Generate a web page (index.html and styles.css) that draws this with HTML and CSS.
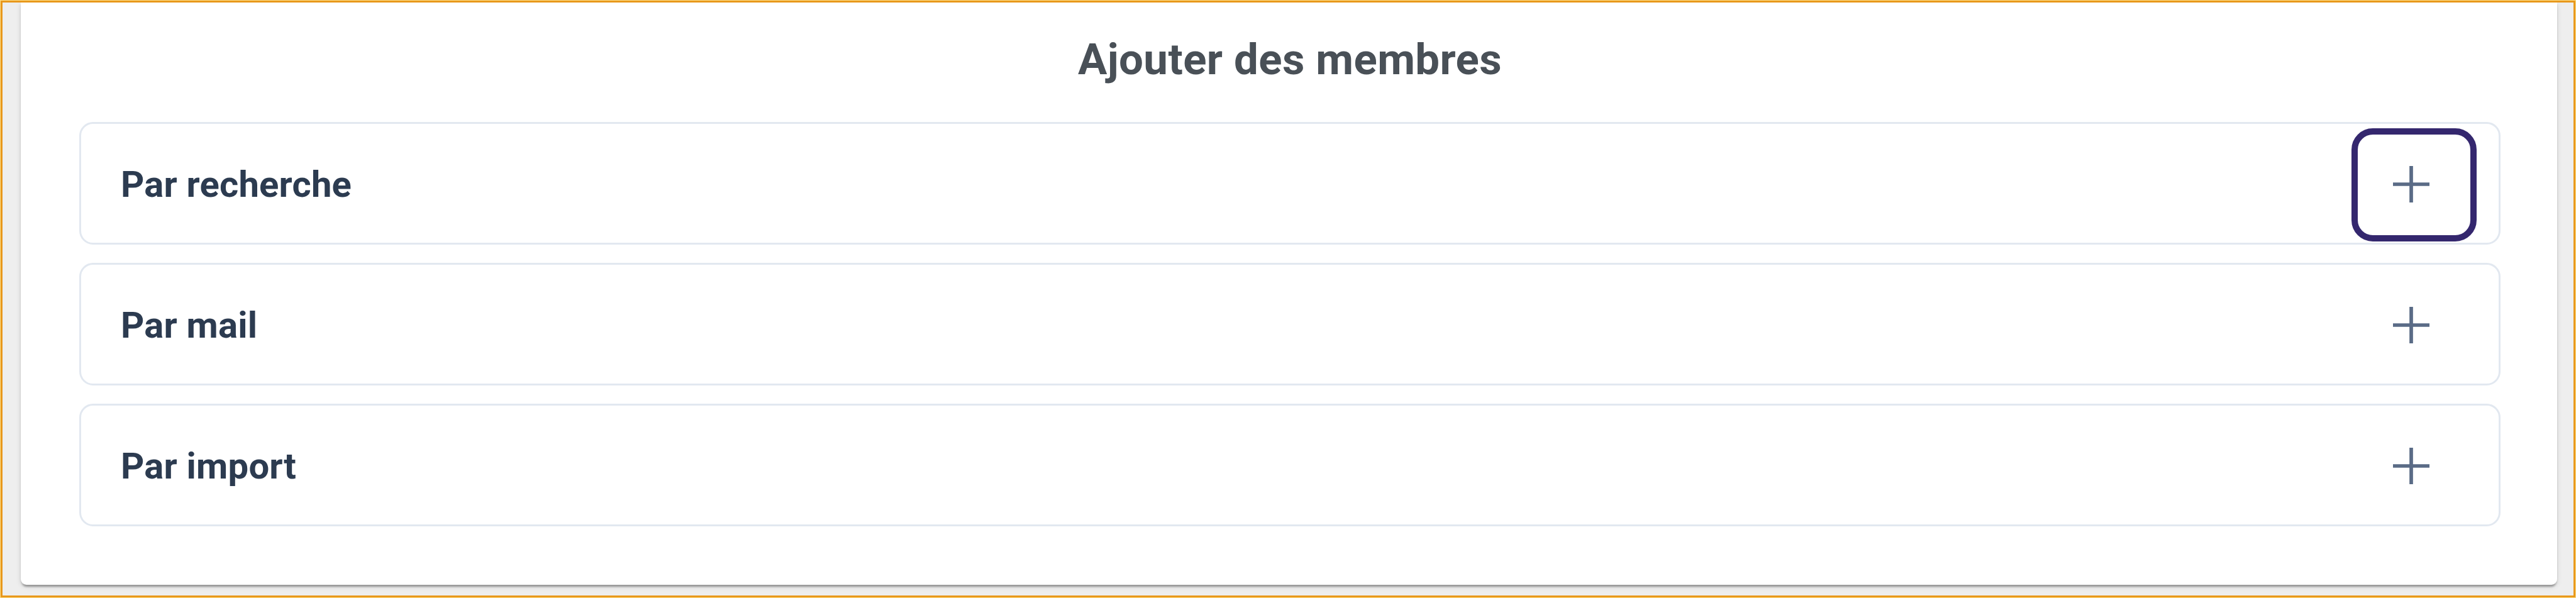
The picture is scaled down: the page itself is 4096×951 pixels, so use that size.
FILE: index.html
```
<!DOCTYPE html>
<html lang="fr">
<head>
    <meta charset="UTF-8">
    <meta name="viewport" content="width=device-width, initial-scale=1.0">
    <title>Ajouter des membres</title>
    <link rel="stylesheet" href="styles.css">
</head>
<body>
    <div class="frame">
        <main class="card">
            <h1>Ajouter des membres</h1>
            <section class="panel">
                <h2>Par recherche</h2>
                <div class="toggle">
                    <svg class="plus" viewBox="0 0 58 58"><path d="M29 0V58M0 29H58"/></svg>
                    <span class="highlight"></span>
                </div>
            </section>
            <section class="panel">
                <h2>Par mail</h2>
                <div class="toggle">
                    <svg class="plus" viewBox="0 0 58 58"><path d="M29 0V58M0 29H58"/></svg>
                </div>
            </section>
            <section class="panel">
                <h2>Par import</h2>
                <div class="toggle">
                    <svg class="plus" viewBox="0 0 58 58"><path d="M29 0V58M0 29H58"/></svg>
                </div>
            </section>
        </main>
    </div>
</body>
</html>
```

FILE: styles.css
```
* {
    box-sizing: border-box;
}
body {
    margin: 0;
    height: 951px;
    border: 1px solid #fde08a;
    font-family: Roboto, Arial, sans-serif;
}
.frame {
    height: 949px;
    border: 3px solid #e8981c;
    background: #eee;
    overflow: hidden;
}
.card {
    display: flex;
    flex-direction: column;
    gap: 29px;
    height: 926px;
    margin: 0 26px 0 29px;
    padding: 0 90px 0 93px;
    background: #fff;
    border-radius: 0 0 9px 9px;
    box-shadow: 0 6px 3px -3px rgba(0, 0, 0, 0.2),
        0 3px 3px 0 rgba(0, 0, 0, 0.14),
        0 3px 8px 0 rgba(0, 0, 0, 0.12);
}
h1, h2 {
    margin: 0;
    font-weight: 700;
}
h1 {
    height: 161px;
    padding-top: 46px;
    text-align: center;
    font-size: 69px;
    line-height: 90px;
    letter-spacing: 0.4px;
    color: #495057;
}
h2 {
    font-size: 58px;
    line-height: 80px;
    letter-spacing: 0.2px;
    color: #2c3b50;
}
.panel {
    display: flex;
    justify-content: space-between;
    align-items: center;
    height: 195px;
    padding: 3px 110px 0 63px;
    border: 3px solid #e2e8f0;
    border-radius: 22px;
}
.toggle {
    position: relative;
    width: 58px;
    height: 58px;
}
.plus {
    display: block;
    width: 58px;
    height: 58px;
    fill: none;
    stroke: #5a6b86;
    stroke-width: 5.7;
}
.highlight {
    position: absolute;
    left: -66px;
    top: -60px;
    width: 199px;
    height: 180px;
    border: 10px solid #34276e;
    border-radius: 34px;
}
```
